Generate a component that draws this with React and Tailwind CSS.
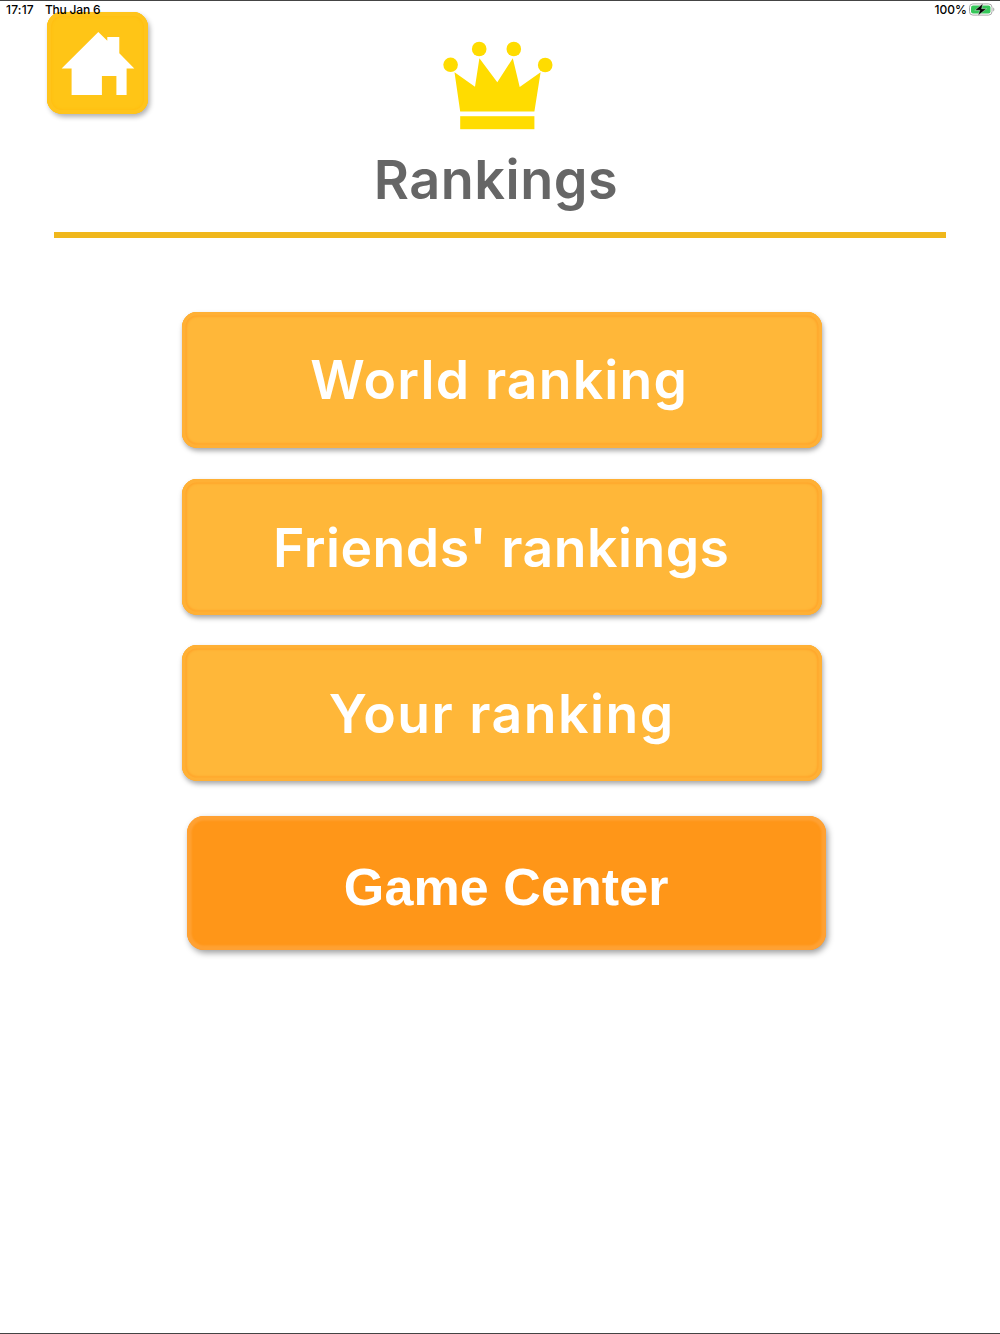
import React from 'react'

const RANKINGS = [
  { label: 'World ranking', text: 'relative -top-px tracking-[1.2px] pr-[5px]' },
  { label: "Friends' rankings", text: 'tracking-[0.5px] pr-[1px]' },
  { label: 'Your ranking', text: 'tracking-[1.5px]' },
]

function StatusBar() {
  return (
    <div className="relative z-10 flex h-[18px] items-center justify-between pl-[6px] pr-[4px] text-[12px] leading-[18px] font-medium text-black">
      <div className="flex gap-[11px]">
        <span className="tracking-[0.2px]">17:17</span>
        <span className="tracking-[-0.2px]">Thu Jan 6</span>
      </div>
      <div className="flex items-center gap-[2px]">
        <span>100%</span>
        <svg className="-mt-px" width="27" height="13" viewBox="0 0 27 13">
          <rect x="0.5" y="0.9" width="22.5" height="11.2" rx="3.4" fill="#fff" stroke="#a8a8a8" />
          <rect x="2" y="2.4" width="19.5" height="8.2" rx="2" fill="#35c759" />
          <path d="M24.2 4.5c1.6.5 1.6 3.5 0 4z" fill="#a8a8a8" />
          <path d="M14 .6 5.8 7.3h5L9 12.4l8.6-6.7h-5z" fill="#000" stroke="#fff" strokeWidth="0.4" />
        </svg>
      </div>
    </div>
  )
}

function HomeIcon() {
  return (
    <svg width="102" height="102" viewBox="0 0 102 102" fill="#fff">
      <path d="M51.3 20 60.3 28.8V25H72.3V41.2L87.3 56.5H79.6V83H69.4V64H54.9V83H24.6V56.5H14.6z" />
    </svg>
  )
}

function Crown() {
  return (
    <svg width="110" height="90" viewBox="0 0 110 90" fill="#ffdc00">
      <circle cx="7.6" cy="24.8" r="7.3" />
      <circle cx="36.2" cy="9" r="7.3" />
      <circle cx="70.8" cy="9" r="7.3" />
      <circle cx="102.2" cy="25" r="7.3" />
      <path d="M11.5 32.3 32 46.8 36.4 18.3 54.3 42.2 69.8 18.3 76.7 47 97.6 32.3 91.4 71.6H17.2z" />
      <rect x="17.2" y="76.2" width="74.2" height="13" />
    </svg>
  )
}

export default function App() {
  return (
    <div className="flex h-[1334px] w-[1000px] flex-col overflow-hidden border-y border-[#444] bg-white font-['Inter',sans-serif]">
      <StatusBar />

      <header className="-mt-[7px] grid grid-cols-[1fr_auto_1fr] items-start pl-[47px] pr-[51px]">
        <button
          type="button"
          aria-label="Home"
          className="h-[102px] w-[101px] rounded-[15px] bg-[#ffc516] shadow-[2px_3px_5px_rgba(0,0,0,0.3),inset_0_0_0_4px_#ffc41b,inset_0_0_2px_5px_#ffbf12]"
        >
          <HomeIcon />
        </button>
        <div className="pt-[28px]">
          <Crown />
        </div>
      </header>

      <h1 className="mt-[18px] h-[70px] pr-[8px] text-center text-[54px] leading-[64px] font-semibold tracking-[0.5px] text-[#666]">
        Rankings
      </h1>
      <div className="mt-[14px] ml-[54px] h-[6px] w-[892px] bg-[#f0b71c]" />

      <main className="mt-[74px] flex flex-col pl-[181.5px]">
        <div className="flex flex-col gap-[30.5px]">
          {RANKINGS.map((item) => (
            <button
              key={item.label}
              type="button"
              className="h-[136px] w-[640.5px] rounded-[15px] bg-[#ffb739] pt-[2px] text-[53.5px] leading-[64px] font-semibold text-white shadow-[1px_3px_5px_rgba(0,0,0,0.34),inset_0_0_0_3.5px_#ffb035,inset_0_0_2px_5px_#ffa72c]"
            >
              <span className={item.text}>{item.label}</span>
            </button>
          ))}
        </div>
        <button
          type="button"
          className="mt-[35px] ml-[5.5px] h-[134px] w-[638.5px] rounded-[17px] bg-[#ff9618] pt-[8px] text-[52px] leading-[60px] font-bold tracking-[0.1px] text-white shadow-[2px_3px_6px_rgba(0,0,0,0.38),inset_0_0_2px_4.5px_#ffa133] font-['Liberation_Sans',sans-serif]"
        >
          Game Center
        </button>
      </main>
    </div>
  )
}
